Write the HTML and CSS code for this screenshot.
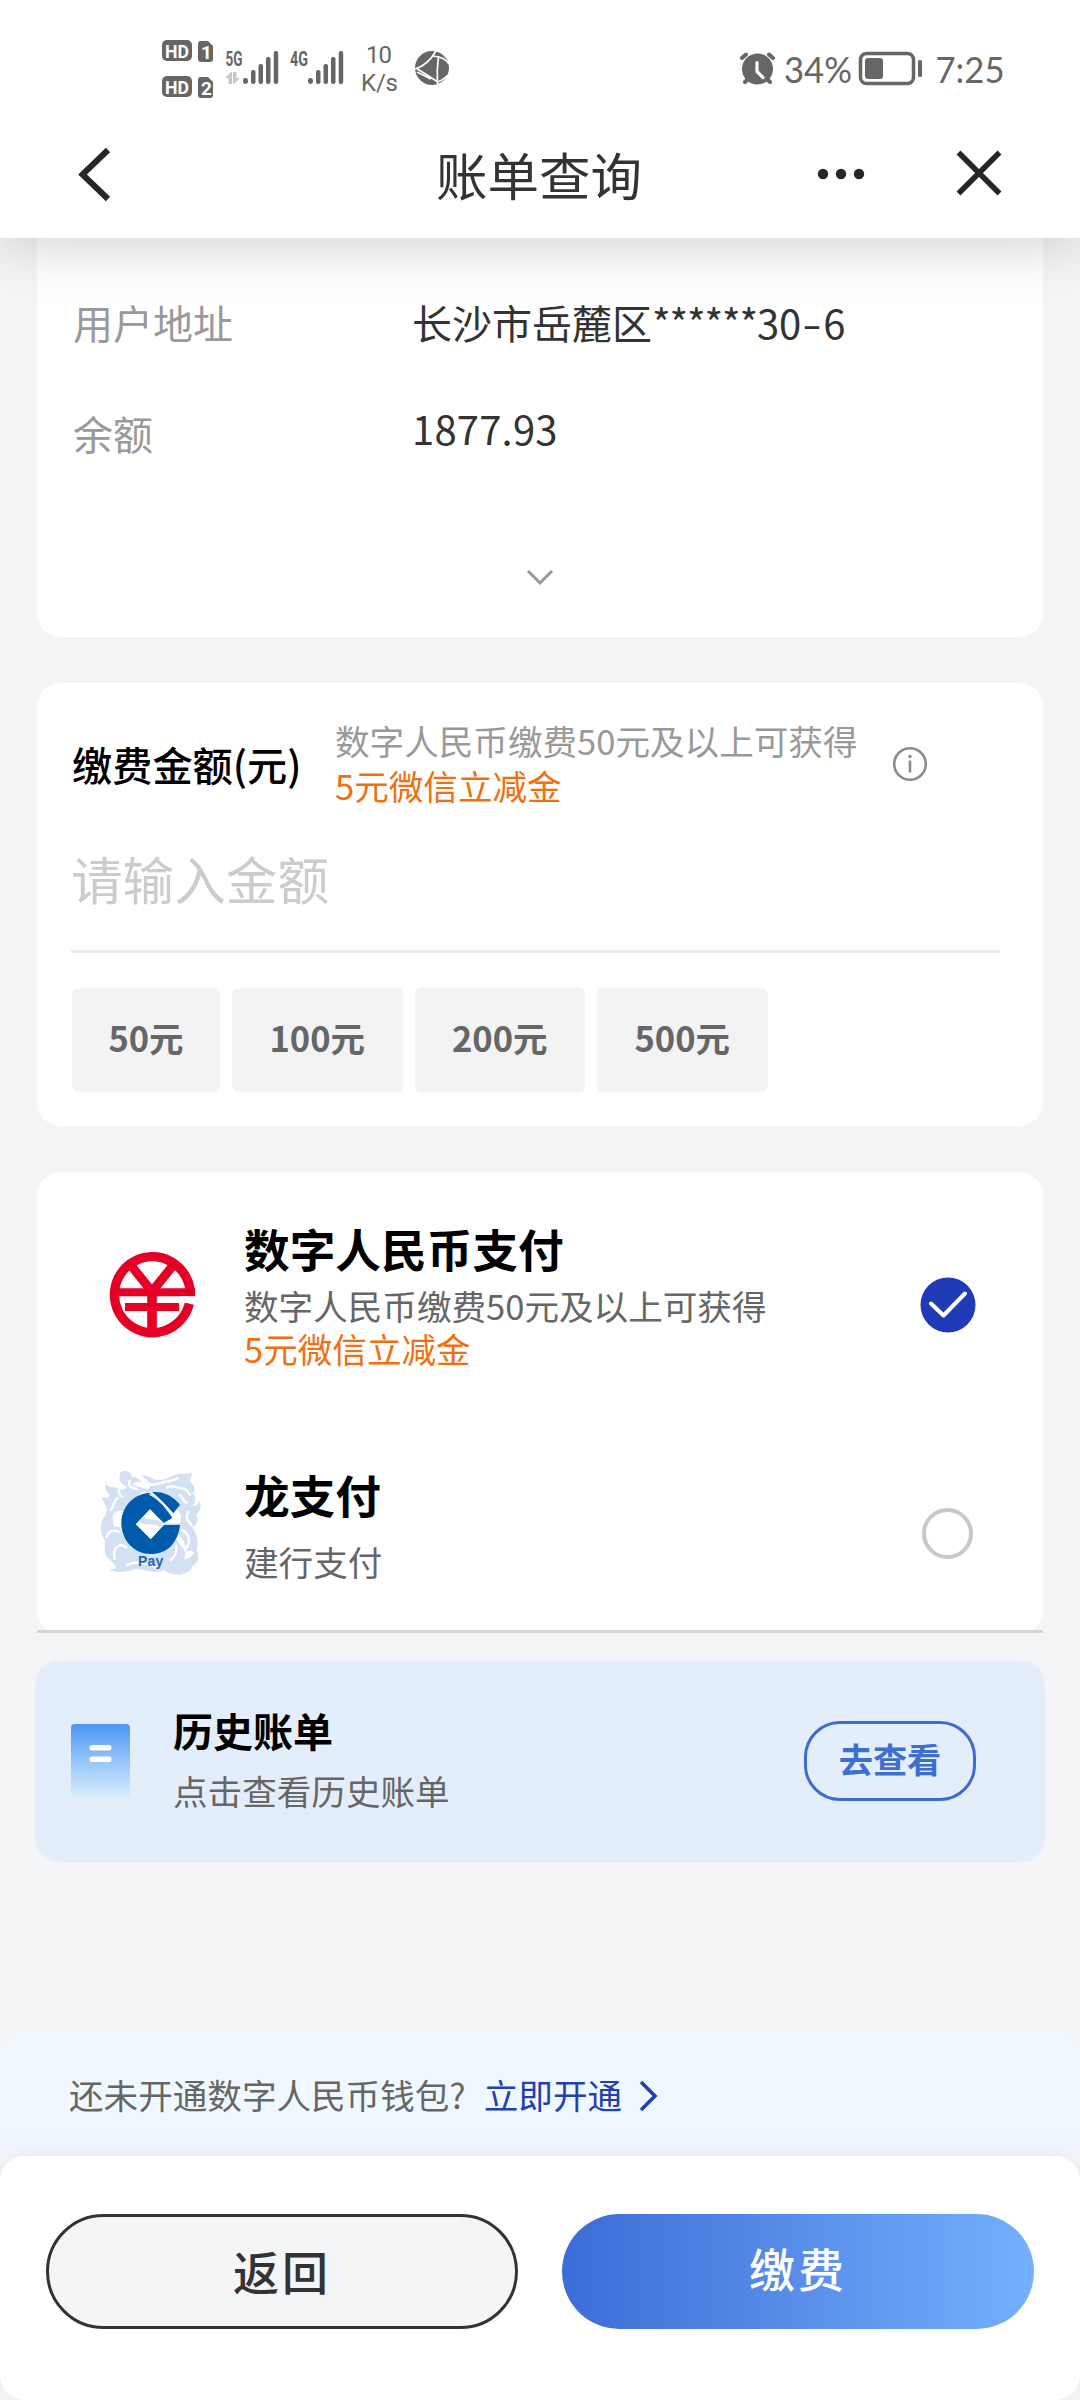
FILE: index.html
```html
<!DOCTYPE html>
<html lang="zh-CN">
<head>
<meta charset="utf-8">
<title>账单查询</title>
<link rel="stylesheet" href="styles.css">
</head>
<body>
<div class="screen">
<header class="top">
  <div class="status">
    <svg width="300" height="70" viewBox="155 35 300 70">
      <g fill="#666">
        <rect x="162" y="40" width="30" height="21" rx="5"/>
        <path d="M201 41h7l5 5v13a3 3 0 0 1-3 3h-9a3 3 0 0 1-3-3v-15a3 3 0 0 1 3-3z"/>
        <rect x="162" y="76" width="30" height="21" rx="5"/>
        <path d="M201 77h7l5 5v13a3 3 0 0 1-3 3h-9a3 3 0 0 1-3-3v-15a3 3 0 0 1 3-3z"/>
        <g id="bars">
          <rect x="243" y="78" width="5" height="6" rx="2.400"/>
          <rect x="251" y="70" width="4.500" height="14" rx="2"/>
          <rect x="258.500" y="64" width="4.500" height="20" rx="2"/>
          <rect x="266" y="57" width="4.500" height="27" rx="2"/>
          <rect x="273.700" y="51" width="4.500" height="33" rx="2"/>
        </g>
        <use href="#bars" x="65"/>
        <circle cx="432" cy="68" r="17"/>
      </g>
      <path fill="#c8c8c8" d="M225 78l6-6h1v12h-3.500v-6zM240 78l-6 6h-1v-12h3.500v6z"/>
      <path fill="none" stroke="#fff" stroke-width="1.700" d="M415 69q13-4 21-18M433 56q12 1 16 8M416 68l22 14q5-2 10-7M438.500 56q-2 14-1 29M417 72q6 3 14 7"/>
      <g fill="#fff" class="tag">
        <text x="165" y="57.500" textLength="24" lengthAdjust="spacingAndGlyphs">HD</text>
        <text x="165" y="93.500" textLength="24" lengthAdjust="spacingAndGlyphs">HD</text>
        <text x="201" y="58.500" textLength="8">1</text>
        <text x="201" y="94.500" textLength="8">2</text>
      </g>
      <g fill="#666" class="net">
        <text x="225.500" y="66" textLength="17" lengthAdjust="spacingAndGlyphs">5G</text>
        <text x="290" y="66" textLength="18" lengthAdjust="spacingAndGlyphs">4G</text>
      </g>
      <g fill="#666" class="rate">
        <text x="366" y="63" textLength="26">10</text>
        <text x="361" y="91" textLength="37">K/s</text>
      </g>
    </svg>
    <svg width="275" height="50" viewBox="735 43 275 50">
      <g fill="none" stroke="#666">
        <path stroke-width="4" stroke-linecap="round" d="M742 58l4-3.500M773 58l-4-3.500M745 82l4-4M770 82l-4-4"/>
        <rect x="860.500" y="53.500" width="53" height="30" rx="6" stroke-width="3.500"/>
      </g>
      <circle cx="757.500" cy="69" r="15.500" fill="#666"/>
      <path fill="none" stroke="#fff" stroke-width="3.200" stroke-linecap="round" stroke-linejoin="round" d="M757 62.500v9l6 6"/>
      <rect x="865" y="58" width="18" height="21" rx="3" fill="#666"/>
      <rect x="918" y="60" width="4" height="17" rx="1.500" fill="#666"/>
      <g fill="#666" class="clock">
        <text x="784" y="83" textLength="68" lengthAdjust="spacingAndGlyphs">34%</text>
        <text x="935.500" y="83" textLength="69" lengthAdjust="spacingAndGlyphs">7:25</text>
      </g>
    </svg>
  </div>
  <nav class="nav">
    <svg width="44" height="60" viewBox="75 144 44 60"><path fill="none" stroke="#262626" stroke-width="6" d="M108 150L82.500 174.500 108 199"/></svg>
    <h1>账单查询</h1>
    <div class="nav-actions">
      <svg width="60" height="20" viewBox="812 164 60 20" fill="#262626"><circle cx="823" cy="174" r="5.200"/><circle cx="841" cy="174" r="5.200"/><circle cx="859" cy="174" r="5.200"/></svg>
      <svg width="48" height="48" viewBox="955 149 48 48"><path stroke="#262626" stroke-width="5.500" d="M958.500 151.500l41 41M999.500 151.500l-41 41"/></svg>
    </div>
  </nav>
</header>

<main>
  <section class="card info">
    <dl>
      <dt>用户地址</dt><dd>长沙市岳麓区<span class="stars">******</span>30<span class="dash">-</span>6</dd>
      <dt>余额</dt><dd class="num">1877.93</dd>
    </dl>
    <svg width="34" height="22" viewBox="0 0 34 22"><path fill="none" stroke="#999" stroke-width="3" d="M6 5l12 12L30 5"/></svg>
  </section>

  <section class="card amount">
    <div class="amount-head">
      <h2>缴费金额(元)</h2>
      <p class="hint">数字人民币缴费50元及以上可获得<br><em>5元微信立减金</em></p>
      <svg width="36" height="36" viewBox="0 0 36 36"><circle cx="18" cy="18" r="15.800" fill="none" stroke="#8a8a8a" stroke-width="2.600"/><circle cx="18" cy="10.500" r="1.700" fill="#8a8a8a"/><path stroke="#8a8a8a" stroke-width="2.600" d="M18 14.500v12"/></svg>
    </div>
    <div class="field">请输入金额</div>
    <div class="chips"><button class="small">50元</button><button>100元</button><button>200元</button><button>500元</button></div>
  </section>

  <div class="methods-wrap">
  <section class="card methods">
    <div class="method">
      <svg width="150" height="140" viewBox="0 0 450 420">
        <g fill="none" stroke="#e60026">
          <path stroke-width="28" d="M331 217A114 114 0 1 0 328 251"/>
          <path stroke-width="27" d="M155 139l61 76 61-76"/>
          <path stroke-width="24" d="M104 217h241"/>
          <path stroke-width="24" d="M135 261h162"/>
          <path stroke-width="29" d="M216 200v140"/>
        </g>
        <path fill="#fff" d="M300 229h50v20h-50z"/>
      </svg>
      <div class="method-text">
        <h3>数字人民币支付</h3>
        <p>数字人民币缴费50元及以上可获得<br><em>5元微信立减金</em></p>
      </div>
      <svg class="check" width="56" height="56" viewBox="0 0 56 56"><circle cx="28" cy="28" r="27.500" fill="#203bb8"/><path fill="none" stroke="#fff" stroke-width="4" stroke-linecap="round" stroke-linejoin="round" d="M11 26.500L23.500 38.500 45 16.500"/></svg>
    </div>
    <div class="method second">
      <svg width="150" height="140" viewBox="0 0 450 420">
        <g fill="#d3e1f2">
          <path d="M122 66c20-8 34 2 32 16 10-4 26 2 30 16-14-6-24-2-26 8 16 2 30 10 50 12-34 12-58 34-72 66-14-4-30-2-36 10-8 18 8 34 4 56-10-14-26-18-42-12-2-30 20-40 18-62-2-16-12-18-14-36 12 6 20 4 24-6-12-6-16-20-14-34 10 14 26 10 38 16 14 6 24 2 28-8-18-2-30-20-20-42z"/>
          <path d="M184 78c16-8 34 14 56 12 30-2 44-24 72-18l24-4c-2 18-10 24-2 32 10 8 14 22 4 30 12 10 8 26 0 38 14-2 20-10 20-16 8 14 4 34-10 42 10 14 4 30-12 38 18 22 22 52 10 80-8-12-18-14-28-6 4-30-22-46-32-72 12-10 20-24 16-40-8-12-16-28-32-42-18-16-46-26-76-26 20-12 26-28-10-48z"/>
          <path d="M64 224c16 8 34 2 56 8 10 44 42 72 80 76 34 6 66-16 90-42 8 22 36 32 22 62 18-2 30-16 36-32 14 24 6 44-12 52 2 12-18 22-34 26-20 0-36-2-50-14-20 10-44 4-78-4-22 0-42 20-86 4 8-2 18-4 22-10-12-8-16-18-22-22-20-12-12-40-12-56-10-8-14-30-12-48z"/>
        </g>
        <g fill="none" stroke="#fff" stroke-width="7" stroke-linecap="round">
          <path d="M80 262c4-20 22-24 36-16M104 326c-8-32 16-50 34-34M140 346c24-16 62-6 94 8M92 180c12-14 8-28 22-36M196 92c12 22 40 8 56 4s34-4 40-12M262 112c16-10 30 4 46 4s14 12 22 18M300 136c10 6 8 18 20 22M326 186c-12 16-4 26 8 38M306 240c24 12 26 40 12 56M272 330c12-10 20-26 16-42M150 92c-10 18 8 24 20 24M120 112c-8 10-2 22 6 28"/>
        </g>
        <path fill="#005bac" d="M208 128C160 132 124 170 124 220c0 52 40 92 88 92 46 0 82-30 88-88h-48l-40 44-44-45 42-45 39 42 28-17C255 172 230 140 208 128zM216 126c38-2 62 12 84 38l-20 26C260 166 238 144 216 126z"/>
        <path fill="#005bac" d="M214 147c24 16 44 38 62 56l-25 16-41-41z"/>
        <path fill="#fff" d="M210 178l44 44-42 44-44-43z"/>
        <path fill="#d3e1f2" d="M190 202c22 12 36-2 60 20l-8 12c-16-18-44-4-66-18z"/>
        <path fill="none" stroke="#e6eef8" stroke-width="4.500" d="M208 132c32 14 50 42 76 69"/>
        <path fill="none" stroke="#e6eef8" stroke-width="4" d="M250 221h52"/>
        <text class="pay" x="174" y="347" textLength="76" fill="#2a62ac">Pay</text>
      </svg>
      <div class="method-text">
        <h3>龙支付</h3>
        <p>建行支付</p>
      </div>
      <span class="radio"></span>
    </div>
  </section>
  </div>

  <section class="history">
    <svg width="60" height="80" viewBox="0 0 60 80"><defs><linearGradient id="doc" x1="0" y1="0" x2="0" y2="1"><stop offset="0" stop-color="#4b95f2"/><stop offset=".5" stop-color="#94c4fa"/><stop offset="1" stop-color="#dceefe"/></linearGradient></defs><rect x="0" y="2" width="59" height="74" rx="4" fill="url(#doc)"/><rect x="18.500" y="23" width="22" height="5.500" rx="2.500" fill="#fff"/><rect x="18.500" y="34.500" width="22" height="5.500" rx="2.500" fill="#fff"/></svg>
    <div class="history-text">
      <h3>历史账单</h3>
      <p>点击查看历史账单</p>
    </div>
    <button>去查看</button>
  </section>
</main>

<footer>
  <div class="banner">还未开通数字人民币钱包?<a>立即开通</a><svg width="22" height="34" viewBox="0 0 22 34"><path fill="none" stroke="#2340b0" stroke-width="3.600" d="M3 3l14 14L3 31"/></svg></div>
  <div class="sheet"><button class="back">返回</button><button class="pay-btn">缴费</button></div>
</footer>
</div>
</body>
</html>
```
FILE: styles.css
```css
* { box-sizing: border-box; margin: 0; padding: 0; }
body { background: #f4f5f7; font-family: "Noto Sans CJK SC", sans-serif; color: #333; }
button { border: 0; font-family: inherit; }
em { font-style: normal; color: #f07010; }
svg { display: block; flex: none; }
.screen { display: flex; flex-direction: column; width: 1080px; height: 2400px; overflow: hidden; }

.top { position: relative; z-index: 1; flex: none; height: 238px; background: #fff; box-shadow: 0 4px 60px rgba(0, 0, 0, .2); }
.status { display: flex; justify-content: space-between; align-items: flex-start; height: 110px; padding: 35px 70px 0 155px; }
.status svg:last-child { margin-top: 8px; }
.tag { font: bold 19px Roboto, sans-serif; }
.net { font: bold 21px Roboto, sans-serif; }
.rate { font: 400 24px Roboto, sans-serif; }
.clock { font: 400 36px Lato, sans-serif; }
.nav { display: grid; grid-template-columns: 1fr auto 1fr; align-items: center; height: 128px; padding: 0 77px 0 75px; }
.nav h1 { font-size: 51.500px; font-weight: 400; line-height: 128px; }
.nav-actions { display: flex; justify-content: flex-end; align-items: center; gap: 83px; }

main { flex: 1; padding: 0 37px; }
.card { background: #fff; border-radius: 24px; }
.info { height: 399px; border-radius: 0 0 24px 24px; padding: 49px 38px 0 36px; display: flex; flex-direction: column; align-items: center; }
.info dl { width: 100%; height: 279px; display: grid; grid-template-columns: 339px 1fr; grid-template-rows: 70px 70px; row-gap: 41px; font-size: 40px; line-height: 70px; white-space: nowrap; }
dt { color: #999; }
.num { margin-top: -5px; letter-spacing: .2px; }
.stars { letter-spacing: -1.200px; }
.dash { display: inline-block; width: 22px; text-align: center; transform: scaleX(1.4); }

.amount { height: 443px; margin-top: 46px; padding: 34px 43px 0 34px; }
.amount-head { display: flex; align-items: center; height: 92px; }
.amount-head svg { margin-top: 2px; }
.amount h2 { width: 264px; padding: 1px 0 0 1px; font-size: 40.200px; font-weight: 500; line-height: 60px; color: #000; white-space: nowrap; }
.hint { width: 557px; font-size: 34.600px; line-height: 45px; color: #999; }
.field { height: 144px; padding-top: 31px; border-bottom: 3px solid #ebebeb; font-size: 51.600px; line-height: 76px; color: #ccc; }
.chips { display: flex; gap: 12px; margin-top: 35px; padding-left: 1px; }
.chips button { width: 170.500px; height: 104px; padding-bottom: 7px; border-radius: 6px; background: #f3f3f3; color: #666; font-size: 34.500px; font-weight: 700; }
.chips .small { width: 148px; }

.methods-wrap { height: 461px; margin-top: 46px; border-bottom: 3px solid #d6d6d6; overflow: hidden; }
.methods { height: 463px; padding: 48px 67px 0 43px; }
.method { display: flex; }
.method-text { flex: 1; padding-left: 14px; }
.method h3 { margin-top: -2px; font-size: 45.700px; font-weight: 700; line-height: 60px; color: #000; }
.method p { margin-top: 6px; font-size: 34.600px; line-height: 43px; color: #666; }
.method .check { margin-top: 57px; }
.method.second { margin-top: 80px; }
.second .method-text { padding-top: 16px; }
.second p { margin-top: 16px; }
.radio { width: 51px; height: 51px; margin: 58px 3px 0 0; border: 4px solid #c8c8c8; border-radius: 50%; }
.pay { font: bold 42px "Liberation Sans", sans-serif; }

.history { display: flex; align-items: center; height: 201px; margin: 28px -2px 0; padding: 0 69px 0 36px; border-radius: 24px; background: #e4eefa; }
.history-text { flex: 1; margin-top: -4px; padding-left: 42px; }
.history h3 { font-size: 40px; font-weight: 700; line-height: 60px; color: #000; }
.history p { font-size: 34.600px; line-height: 60px; color: #666; }
.history button { width: 172px; height: 80px; margin-top: -2px; padding-bottom: 5px; border: 3px solid #3c6cd0; border-radius: 36px; background: none; font-size: 34.200px; font-weight: 700; color: #3e6fd0; }

footer { flex: none; }
.banner { display: flex; align-items: center; height: 124px; padding: 0 70px 0 69px; border-radius: 24px 24px 0 0; background: linear-gradient(#f0f8ff 75%, #eef3fd); font-size: 34.600px; color: #666; }
.banner a { margin: 0 16px 0 18px; color: #2340b0; }
.banner svg { margin-top: 3px; }
.sheet { display: flex; gap: 44px; height: 244px; padding: 58px 46px 0; border-radius: 24px; background: #fff; box-shadow: 0 0 12px rgba(0, 0, 40, .06); }
.sheet button { width: 472px; height: 115px; border-radius: 58px; font-size: 46px; font-weight: 500; letter-spacing: 3px; }
.sheet .back { padding: 0 0 3px; border: 3px solid #333; background: #f4f5f7; color: #333; }
.sheet .pay-btn { padding: 0 0 9px; background: linear-gradient(90deg, #3c6cd6, #74b0fc); color: #fff; }
```
